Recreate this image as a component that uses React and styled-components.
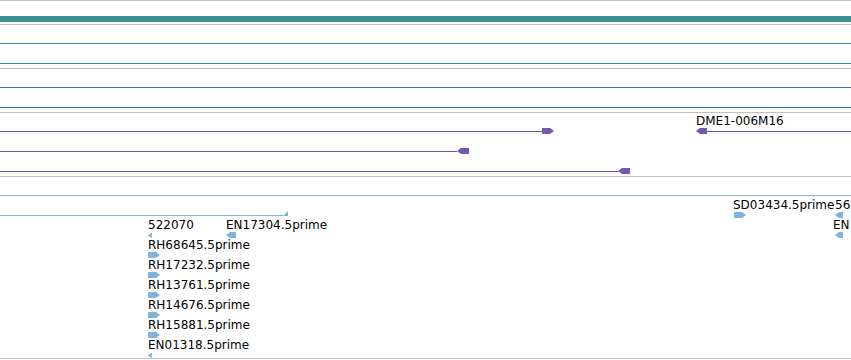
import React from "react";
import styled, { createGlobalStyle } from "styled-components";

const Global = createGlobalStyle`
  html, body { margin: 0; padding: 0; background: #ffffff; overflow: hidden; }
  #root { width: 851px; }
`;

const SEP = "#c0c0c0";
const C = {
  teal: "#3f8f8f",
  cyan: "#2a90ad",
  blue: "#3c6bbd",
  purple: "#6c52a8",
  purpleHead: "#7458b0",
  light: "#80b4dd",
};

const Panel = styled.div`
  width: 851px;
  overflow: hidden;
  border-top: 1px solid ${SEP};
  font-family: "DejaVu Sans", "Liberation Sans", sans-serif;
  font-size: 12px;
  color: #000;
`;

const Track = styled.section`
  display: flex;
  flex-direction: column;
  padding-bottom: ${(p) => p.$pad ?? 3}px;
  border-bottom: 1px solid ${SEP};
`;

const Row = styled.div`
  position: relative;
  height: 20px;
`;

const Feature = styled.div`
  position: absolute;
  top: 0;
  left: ${(p) => p.$x}px;
  display: flex;
  flex-direction: column;
  align-items: flex-start;
`;

const Label = styled.span`
  display: block;
  height: 15px;
  padding-top: 2px;
  box-sizing: border-box;
  line-height: 12px;
  white-space: nowrap;
`;

const Glyph = styled.svg`
  display: block;
  margin-left: ${(p) => p.$dx || 0}px;
  overflow: visible;
`;

const Bar = styled.div`
  position: absolute;
  left: 0;
  right: 0;
  top: 15px;
  height: 6px;
  background: ${(p) => p.$color};
`;

const Rule = styled.div`
  position: absolute;
  left: 0;
  right: 0;
  top: 18px;
  height: 1px;
  background: ${(p) => p.$color};
`;

function Arrow({ x, w, head = 12, dir, color, headColor, label, dx, tri }) {
  const hc = headColor || color;
  let line = null;
  let shape = null;
  if (tri === "left") {
    shape = <polygon points={`${w},0.5 0,3.5 ${w},6`} fill={hc} />;
  } else if (tri === "corner") {
    shape = <polygon points={`0,4 ${w},-1 ${w},4`} fill={hc} />;
  } else if (dir === "right") {
    const s = w - head;
    line = s > 0 ? <rect x={0} y={3} width={s} height={1} fill={color} /> : null;
    shape = (
      <polygon
        points={`${s},0 ${w - 4},0 ${w},3 ${w - 4},6 ${s},6`}
        fill={hc}
      />
    );
  } else if (dir === "left") {
    shape = (
      <polygon points={`${head},0 4,0 0,3 4,6 ${head},6`} fill={hc} />
    );
    line =
      w > head ? (
        <rect x={head} y={3} width={w - head} height={1} fill={color} />
      ) : null;
  }
  return (
    <Feature $x={x}>
      <Label>{label || ""}</Label>
      <Glyph width={w} height={6} $dx={dx} viewBox={`0 0 ${w} 6`}>
        {line}
        {shape}
      </Glyph>
    </Feature>
  );
}

function LineTo({ x, w, color }) {
  return (
    <Feature $x={x}>
      <Label />
      <Glyph width={w} height={6} viewBox={`0 0 ${w} 6`}>
        <rect x={0} y={3} width={w} height={1} fill={color} />
      </Glyph>
    </Feature>
  );
}

const rhRows = [
  "RH68645.5prime",
  "RH17232.5prime",
  "RH13761.5prime",
  "RH14676.5prime",
  "RH15881.5prime",
];

export default function App() {
  return (
    <>
      <Global />
      <Panel>
        <Track>
          <Row>
            <Bar $color={C.teal} />
          </Row>
        </Track>

        <Track>
          <Row>
            <Rule $color={C.cyan} />
          </Row>
          <Row>
            <Rule $color={C.cyan} />
          </Row>
        </Track>

        <Track>
          <Row>
            <Rule $color={C.blue} />
          </Row>
          <Row>
            <Rule $color={C.blue} />
          </Row>
        </Track>

        <Track>
          <Row>
            <Arrow x={0} w={554} dir="right" color={C.purple} headColor={C.purpleHead} />
            <Arrow
              x={696}
              w={155}
              head={11}
              dir="left"
              color={C.purple}
              headColor={C.purpleHead}
              label="DME1-006M16"
            />
          </Row>
          <Row>
            <LineTo x={0} w={457} color={C.purple} />
            <Arrow x={457} w={12} dir="left" color={C.purple} headColor={C.purpleHead} />
          </Row>
          <Row>
            <LineTo x={0} w={618} color={C.purple} />
            <Arrow x={618} w={12} dir="left" color={C.purple} headColor={C.purpleHead} />
          </Row>
        </Track>

        <Track $pad={1}>
          <Row>
            <Rule $color={C.light} />
          </Row>
          <Row>
            <LineTo x={0} w={283} color={C.light} />
            <Arrow x={283} w={5} tri="corner" color={C.light} />
            <Arrow x={733} w={12} dir="right" color={C.light} label="SD03434.5prime" dx={1} />
            <Arrow x={835} w={8} head={8} dir="left" color={C.light} label="56" />
          </Row>
          <Row>
            <Arrow x={148} w={4} tri="left" color={C.light} label="522070" />
            <Arrow x={226} w={10} head={10} dir="left" color={C.light} label="EN17304.5prime" />
            <Arrow x={833} w={8} head={8} dir="left" color={C.light} label="EN" dx={2} />
          </Row>
          {rhRows.map((name) => (
            <Row key={name}>
              <Arrow x={148} w={12} dir="right" color={C.light} label={name} />
            </Row>
          ))}
          <Row>
            <Arrow x={148} w={4} tri="left" color={C.light} label="EN01318.5prime" />
          </Row>
        </Track>
      </Panel>
    </>
  );
}
